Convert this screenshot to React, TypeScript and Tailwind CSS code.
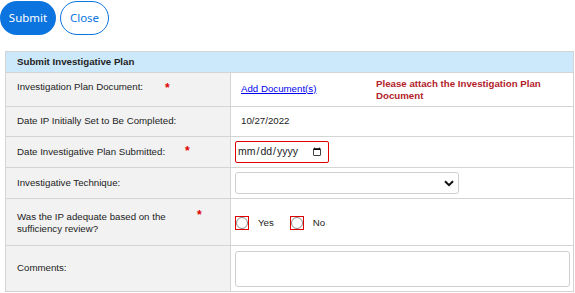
import React from "react";

function Star({ ml }: { ml: string }) {
  return <span className={`text-[#e00000] font-bold text-[12px] leading-none ${ml}`}>*</span>;
}

function RedRadio({ label }: { label: string }) {
  return (
    <label className="flex items-center gap-[9px]">
      <span className="w-[14px] h-[14px] border border-[#e00000] flex items-center justify-center">
        <span className="w-[12px] h-[12px] rounded-full border border-[#8a8a8a] bg-white"></span>
      </span>
      <span>{label}</span>
    </label>
  );
}

export default function App() {
  const cellL = "bg-[#f2f2f2] border border-[#d4d4d4] pl-[11px] pr-2 align-middle";
  const cellR = "bg-white border border-[#d4d4d4] align-middle";

  return (
    <div className="w-[575px] h-[293px] bg-white font-['Liberation_Sans',Arial,sans-serif] text-[9.7px] text-[#222]">
      <div className="flex gap-[4px] pt-[1px] h-[51px]">
        <button className="h-[34px] w-[56px] rounded-full bg-[#0b74de] text-white text-[11.5px] font-['Noto_Sans',sans-serif]">
          Submit
        </button>
        <button className="h-[34px] w-[49px] rounded-full bg-white border border-[#0b74de] text-[#0b74de] text-[11.5px] font-['Noto_Sans',sans-serif]">
          Close
        </button>
      </div>
      <div className="pl-[5px] pr-[1px]">
        <table className="w-full border-collapse table-fixed">
          <colgroup>
            <col className="w-[225px]" />
            <col />
          </colgroup>
          <tbody>
            <tr className="h-[21px]">
              <td colSpan={2} className="bg-[#cce9fb] border border-[#d4d4d4] pl-[11px] font-bold">
                Submit Investigative Plan
              </td>
            </tr>
            <tr className="h-[34px]">
              <td className={cellL}>
                <span className="relative -top-[2px]">Investigation Plan Document:</span>
                <Star ml="ml-[22px]" />
              </td>
              <td className={cellR}>
                <div className="flex items-start pl-[10px]">
                  <a href="#" className="text-[#0000ee] underline w-[135px] pt-[4px]">
                    Add Document(s)
                  </a>
                  <span className="text-[#b2222a] font-bold w-[172px] leading-[12px]">
                    Please attach the Investigation Plan Document
                  </span>
                </div>
              </td>
            </tr>
            <tr className="h-[30px]">
              <td className={cellL}>Date IP Initially Set to Be Completed:</td>
              <td className={`${cellR} pl-[10px]`}>10/27/2022</td>
            </tr>
            <tr className="h-[31px]">
              <td className={cellL}>
                <span>Date Investigative Plan Submitted:</span>
                <Star ml="ml-[20px]" />
              </td>
              <td className={`${cellR} pl-[4px]`}>
                <input
                  type="date"
                  className="w-[94px] h-[22px] border border-[#e00000] rounded-[2px] text-[10.5px] pl-[1px] pr-[4px] text-[#222]"
                />
              </td>
            </tr>
            <tr className="h-[31px]">
              <td className={cellL}>Investigative Technique:</td>
              <td className={`${cellR} pl-[4px]`}>
                <div className="relative w-[224px] h-[22px] border border-[#cfcfcf] rounded-[3px] bg-white">
                  <svg
                    className="absolute right-[4px] top-[7px]"
                    width="10"
                    height="7"
                    viewBox="0 0 10 7"
                  >
                    <path d="M1 1.2 L5 5.2 L9 1.2" fill="none" stroke="#111" strokeWidth="2" />
                  </svg>
                </div>
              </td>
            </tr>
            <tr className="h-[47px]">
              <td className={cellL}>
                <div className="flex items-start">
                  <span className="w-[173px] leading-[12px] pt-[2px]">
                    Was the IP adequate based on the sufficiency review?
                  </span>
                  <Star ml="ml-[7px]" />
                </div>
              </td>
              <td className={`${cellR} pl-[4px]`}>
                <div className="flex items-center gap-[16px] pt-[2px]">
                  <RedRadio label="Yes" />
                  <RedRadio label="No" />
                </div>
              </td>
            </tr>
            <tr className="h-[46px]">
              <td className={cellL}>Comments:</td>
              <td className={`${cellR} pl-[4px] pr-[3px]`}>
                <textarea className="block w-full h-[36px] border border-[#cfcfcf] rounded-[3px] resize-none"></textarea>
              </td>
            </tr>
          </tbody>
        </table>
      </div>
    </div>
  );
}
